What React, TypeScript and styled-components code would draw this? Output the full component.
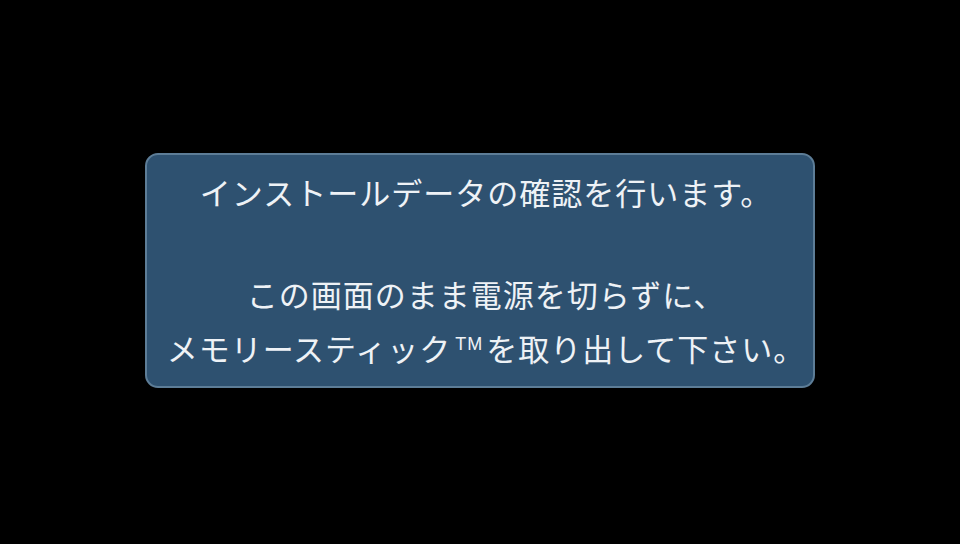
import React from "react";
import styled, { createGlobalStyle } from "styled-components";

const GlobalStyle = createGlobalStyle`
  html, body {
    margin: 0;
    padding: 0;
    background: #000;
  }
  #root {
    height: 544px;
  }
`;

const Screen = styled.div`
  width: 960px;
  height: 544px;
  background: #000;
  display: flex;
  justify-content: center;
  align-items: center;
  font-family: "Noto Sans CJK JP", "Noto Sans", sans-serif;
`;

const Dialog = styled.div`
  box-sizing: border-box;
  width: 670px;
  height: 235px;
  margin-top: -3px;
  background: #2e5170;
  border: 2px solid #5d7d97;
  border-radius: 13px;
  display: flex;
  flex-direction: column;
  align-items: center;
  justify-content: center;
  padding: 0 0 5px 12px;
`;

const Line = styled.div<{ $blank?: boolean }>`
  height: 51px;
  line-height: 51px;
  font-size: 31px;
  letter-spacing: 1px;
  color: #eef2f6;
  white-space: nowrap;
`;

const Tm = styled.span`
  font-family: "Liberation Sans", sans-serif;
  font-size: 18px;
  vertical-align: 11px;
  letter-spacing: 1px;
  margin: 0 3px 0 4px;
`;

export default function App() {
  return (
    <>
      <GlobalStyle />
      <Screen>
        <Dialog>
          <Line>インストールデータの確認を行います。</Line>
          <Line $blank />
          <Line>この画面のまま電源を切らずに、</Line>
          <Line>
            メモリースティック<Tm>TM</Tm>を取り出して下さい。
          </Line>
        </Dialog>
      </Screen>
    </>
  );
}
